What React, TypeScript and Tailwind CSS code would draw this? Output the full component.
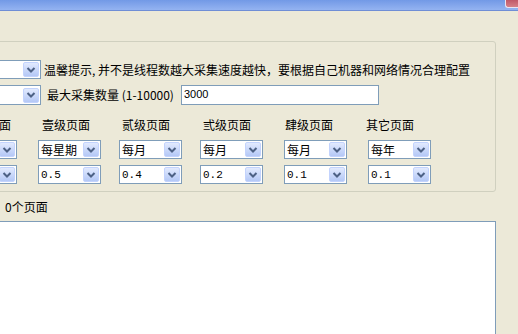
import React from "react";

type Col = { label: string; freq: string; weight: string; head: string; gap: string };

const cols: Col[] = [
  { label: "壹级页面", freq: "每星期", weight: "0.5", head: "ml-[31px]", gap: "ml-[21px]" },
  { label: "贰级页面", freq: "每月", weight: "0.4", head: "ml-[32px]", gap: "ml-[18px]" },
  { label: "弎级页面", freq: "每月", weight: "0.2", head: "ml-[33px]", gap: "ml-[18px]" },
  { label: "肆级页面", freq: "每月", weight: "0.1", head: "ml-[34px]", gap: "ml-[21px]" },
  { label: "其它页面", freq: "每年", weight: "0.1", head: "ml-[33px]", gap: "ml-[21px]" },
];

function ArrowButton() {
  return (
    <div className="flex h-[15px] w-[16px] shrink-0 items-center justify-center rounded-[2px] border border-[#c3d3fd] bg-gradient-to-b from-[#e2eafe] to-[#b4c8f6]">
      <svg width="10" height="8" viewBox="0 0 10 8">
        <path d="M1.5 2 L5 5.5 L8.5 2" fill="none" stroke="#4d6185" strokeWidth="2" />
      </svg>
    </div>
  );
}

function Combo({ className, text, mono }: { className: string; text?: string; mono?: boolean }) {
  return (
    <div className={`flex shrink-0 items-center justify-between border border-[#7f9db9] bg-white pl-[2px] pr-px ${className}`}>
      <span
        className={
          mono
            ? "font-['Liberation_Mono',monospace] text-[11px] leading-[14px]"
            : "leading-[14px]"
        }
      >
        {text}
      </span>
      <ArrowButton />
    </div>
  );
}

export default function App() {
  return (
    <div className="relative h-[334px] w-[518px] overflow-hidden bg-[#ece9d8] font-['Noto_Sans_CJK_SC',sans-serif] text-[12px] leading-[14px] text-black">
      {/* title bar */}
      <div className="flex h-[11px] justify-end border-b border-[#6f8ed6] bg-gradient-to-b from-[#7299e6] to-[#94b3f1]">
        <div className="h-[8px] w-[13px] rounded-bl-[3px] border-b border-l border-[#e9e4f0] bg-gradient-to-b from-[#c05868] to-[#d67f88]" />
      </div>

      {/* settings group */}
      <div className="ml-[-10px] mt-[30px] h-[151px] w-[506px] rounded-[3px] border border-[#d0d0bf] pt-[18px]">
        <div className="flex h-[19px] items-center">
          <Combo className="h-[19px] w-[50px]" />
          <span className="ml-[3px] whitespace-nowrap">温馨提示, 并不是线程数越大采集速度越快，要根据自己机器和网络情况合理配置</span>
        </div>

        <div className="mt-[6px] flex h-[20px] items-center">
          <Combo className="h-[20px] w-[50px]" />
          <span className="ml-[6px] whitespace-nowrap">最大采集数量 (1-10000)</span>
          <div className="ml-[7px] h-[20px] w-[198px] border border-[#7f9db9] bg-white pl-[2px] pt-[2px] font-['Liberation_Sans',sans-serif] text-[11px] leading-[13px]">
            3000
          </div>
        </div>

        <div className="mt-[13px] flex h-[14px] whitespace-nowrap">
          <span className="ml-[8px]">面</span>
          {cols.map((c) => (
            <span key={c.label} className={c.head}>
              {c.label}
            </span>
          ))}
        </div>

        <div className="mt-[8px] flex h-[19px]">
          <Combo className="h-[19px] w-[26px]" />
          {cols.map((c) => (
            <div key={c.label} className={c.gap}>
              <Combo className="h-[19px] w-[63px]" text={c.freq} />
            </div>
          ))}
        </div>

        <div className="mt-[6px] flex h-[19px]">
          <Combo className="h-[19px] w-[26px]" />
          {cols.map((c) => (
            <div key={c.label} className={c.gap}>
              <Combo className="h-[19px] w-[63px]" text={c.weight} mono />
            </div>
          ))}
        </div>
      </div>

      <div className="mt-[8px] pl-[5px]">0个页面</div>

      {/* result list */}
      <div className="ml-[-10px] mt-[7px] h-[120px] w-[506px] border-l border-r border-t border-[#7f9db9] bg-white" />
    </div>
  );
}
